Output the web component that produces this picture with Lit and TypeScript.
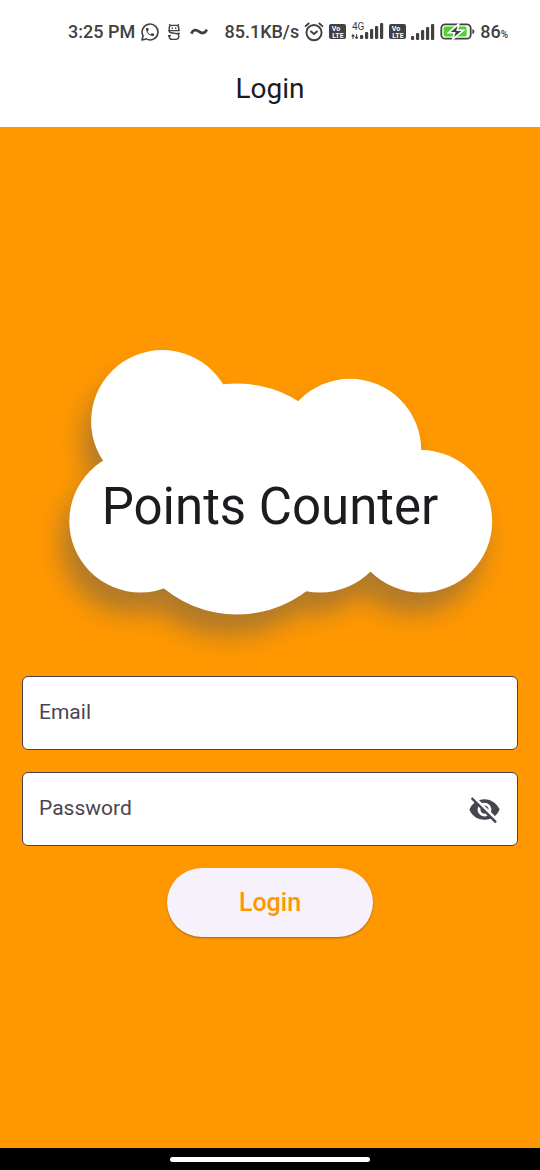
import { LitElement, html, css, svg } from "lit";
import { customElement, state } from "lit/decorators.js";

const PHONE =
  "M6.62 10.79c1.44 2.83 3.76 5.14 6.59 6.59l2.2-2.2c.27-.27.67-.36 1.02-.24 1.12.37 2.33.57 3.57.57.55 0 1 .45 1 1V20c0 .55-.45 1-1 1-9.39 0-17-7.61-17-17 0-.55.45-1 1-1h3.5c.55 0 1 .45 1 1 0 1.25.2 2.45.57 3.57.11.35.03.74-.25 1.02l-2.2 2.2z";
const EYE_OFF =
  "M12 7c2.76 0 5 2.24 5 5 0 .65-.13 1.26-.36 1.83l2.92 2.92c1.51-1.26 2.7-2.89 3.43-4.75-1.73-4.39-6-7.5-11-7.5-1.4 0-2.74.25-3.98.7l2.16 2.16C10.74 7.13 11.35 7 12 7zM2 4.27l2.28 2.28.46.46C3.08 8.3 1.78 10.02 1 12c1.73 4.39 6 7.5 11 7.5 1.55 0 3.03-.3 4.38-.84l.42.42L19.73 22 21 20.73 3.27 3 2 4.27zM7.53 9.8l1.55 1.55c-.05.21-.08.43-.08.65 0 1.66 1.34 3 3 3 .22 0 .44-.03.65-.08l1.55 1.55c-.67.33-1.41.53-2.2.53-2.76 0-5-2.24-5-5 0-.79.2-1.53.53-2.2zm4.31-.78l3.15 3.15.02-.16c0-1.66-1.34-3-3-3l-.17.01z";
const EYE =
  "M12 4.5C7 4.5 2.73 7.61 1 12c1.73 4.39 6 7.5 11 7.5s9.27-3.11 11-7.5c-1.73-4.39-6-7.5-11-7.5zM12 17c-2.76 0-5-2.24-5-5s2.24-5 5-5 5 2.24 5 5-2.24 5-5 5zm0-8c-1.66 0-3 1.34-3 3s1.34 3 3 3 3-1.34 3-3-1.34-3-3-3z";

@customElement("status-bar")
export class StatusBar extends LitElement {
  static styles = css`
    :host {
      display: flex;
      justify-content: space-between;
      height: 31px;
      padding: 16px 32px 0 68px;
      color: #414141;
      font: 500 18px/31px Roboto, sans-serif;
    }
    .group {
      display: flex;
      align-items: center;
      gap: 5px;
      white-space: nowrap;
    }
    .apps {
      gap: 6px;
    }
    .app {
      margin-left: 2px;
    }
    svg {
      display: block;
      flex: none;
    }
    .unit {
      font-size: 10px;
      line-height: 1;
    }
    .tiny {
      font: 10px Roboto, sans-serif;
      fill: #414141;
    }
    .badge {
      font: 700 7px Roboto, sans-serif;
      fill: #fff;
      text-anchor: middle;
    }
  `;

  private volte() {
    return html`<svg width="17" height="16" viewBox="0 0 17 16">
      <rect width="17" height="15" rx="2" fill="#414141" />
      <text class="badge" x="7" y="7">Vo</text>
      <text class="badge" x="9" y="14">LTE</text>
    </svg>`;
  }

  private bars(x: number) {
    return [0, 1, 2, 3, 4].map(
      (i) => svg`<rect x=${x + i * 5} y=${12 - i * 3} width="3.2" height=${4 + i * 3} rx="1" fill="#414141" />`
    );
  }

  render() {
    return html`
      <div class="group apps">
        <span>3:25 PM</span>
        <svg width="18" height="18" viewBox="0 0 18 18" fill="none" stroke="#414141">
          <path stroke-width="1.6" stroke-linejoin="round" d="M1 17 2.1 12.8A7.9 7.9 0 1 1 5.2 15.9Z" />
          <path transform="translate(3.6 3.6) scale(.45)" fill="#414141" stroke="none" d=${PHONE} />
        </svg>
        <svg class="app" width="14" height="18" viewBox="0 0 14 18" fill="none" stroke="#414141" stroke-width="1.4">
          <path d="M2.2 7.4V5Q2.2 2.4 4.8 2.4H9.2Q11.8 2.4 11.8 5V7.4M3.4 3 2.4 1M10.6 3 11.6 1M1.2 7.6H12.8M4.6 5.2H6M8 5.2H9.4M2.2 7.8Q2.2 9.6 4.4 9.8L9.6 10.6Q11.8 11 11.8 13Q11.8 16.4 8.6 16.4H5.4Q2.2 16.4 2.2 13.2M1 12.8H4M9.8 10.4H13" />
        </svg>
        <svg class="app" width="20" height="18" viewBox="0 0 20 18" fill="none" stroke="#414141" stroke-width="2.8">
          <path d="M2.3 10.6C4 6.5 7 6.2 9.8 8.4S15.5 11 17.8 6.6" />
        </svg>
      </div>
      <div class="group">
        <span>85.1KB/s</span>
        <svg width="20" height="20" viewBox="0 0 20 20" fill="none" stroke="#414141" stroke-width="1.9">
          <circle cx="10" cy="10.6" r="7.6" />
          <path d="M1 4.6 5.2 1M19 4.6 14.8 1M6.4 9 10 12 13.6 9" />
        </svg>
        ${this.volte()}
        <svg width="33" height="22" viewBox="0 0 33 22">
          <text class="tiny" x="1" y="9">4G</text>
          <path d="M2 18V14M.8 15.2 2 13.4 3.2 15.2ZM5.6 13V17M4.4 16.2 5.6 18 6.8 16.2Z" fill="#414141" stroke="#414141" />
          <g transform="translate(0 2)">${this.bars(9)}</g>
        </svg>
        ${this.volte()}
        <svg width="24" height="16" viewBox="0 0 24 16">${this.bars(0)}</svg>
        <svg width="35" height="18" viewBox="0 0 35 18">
          <rect x="1.3" y="1.3" width="29.4" height="14.4" rx="4" fill="#fff" stroke="#414141" stroke-width="1.8" />
          <rect x="3.6" y="3.6" width="23" height="9.8" rx="1.6" fill="#53d22c" />
          <path d="M32.4 6Q34.4 6.5 34.4 8.5T32.4 11Z" fill="#414141" />
          <path d="M18.8 .8 8.5 9.8H14.6L12.6 16.4 23.4 7.3H17.3Z" fill="#414141" stroke="#fff" stroke-width="1.6" />
        </svg>
        <span>86<span class="unit">%</span></span>
      </div>
    `;
  }
}

@customElement("cloud-logo")
export class CloudLogo extends LitElement {
  static styles = css`
    :host {
      display: grid;
      place-items: center;
      width: 100%;
      max-width: 496px;
    }
    .cloud,
    .name {
      grid-area: 1 / 1;
    }
    .cloud {
      display: block;
      width: 100%;
      overflow: visible;
    }
    .name {
      z-index: 1;
      margin: 0;
      padding-top: 22px;
      color: #1c1b1f;
      font: 400 51px/64px Roboto, sans-serif;
    }
  `;

  render() {
    return html`
      <svg class="cloud" viewBox="22 338 496 316" aria-hidden="true">
        <defs>
          <filter id="shade" x="-20%" y="-20%" width="140%" height="150%" color-interpolation-filters="sRGB">
            <feDropShadow dx="-8" dy="21" stdDeviation="13" flood-color="#585858" flood-opacity=".48" />
          </filter>
        </defs>
        <g fill="#fff" filter="url(#shade)">
          <circle cx="237" cy="499" r="115.5" />
          <circle cx="162.3" cy="421.3" r="71.2" />
          <circle cx="350" cy="450" r="71.2" />
          <circle cx="140.5" cy="521.3" r="71.2" />
          <circle cx="320" cy="521.3" r="71.2" />
          <circle cx="421" cy="521.3" r="71.2" />
        </g>
      </svg>
      <h1 class="name">Points Counter</h1>
    `;
  }
}

@customElement("app-root")
export class AppRoot extends LitElement {
  static styles = css`
    :host {
      display: flex;
      flex-direction: column;
      min-height: 100vh;
      background: #ff9800;
      font-family: Roboto, sans-serif;
    }
    .top {
      background: #fff;
    }
    .title {
      margin: 0;
      padding: 4px 0 0;
      color: #1c1b1f;
      font-size: 28px;
      font-weight: 400;
      line-height: 76px;
      text-align: center;
    }
    .content {
      flex: 1;
      display: flex;
      flex-direction: column;
      align-items: center;
      justify-content: center;
      gap: 22px;
      padding: 0 22px;
    }
    .form {
      display: flex;
      flex-direction: column;
      align-items: center;
      gap: 22px;
      width: 100%;
    }
    .field {
      display: grid;
      grid-template-columns: 1fr auto;
      align-items: center;
      box-sizing: border-box;
      width: 100%;
      height: 74px;
      padding: 0 16px;
      border: 1px solid #49454f;
      border-radius: 6px;
      background: #fff;
    }
    .label,
    .input {
      grid-area: 1 / 1;
      padding: 0 0 2px;
      color: #49454f;
      font: 400 21px/32px Roboto, sans-serif;
    }
    .label {
      z-index: 1;
      pointer-events: none;
    }
    .input {
      min-width: 0;
      border: 0;
      outline: 0;
      background: none;
    }
    .field:has(.input:not(:placeholder-shown)) .label {
      visibility: hidden;
    }
    .toggle {
      display: block;
      padding: 0;
      border: 0;
      background: none;
      cursor: pointer;
    }
    .eye {
      display: block;
      fill: #49454f;
    }
    .submit {
      width: 206px;
      height: 69px;
      border: 0;
      border-radius: 35px;
      background: #f6f1fa;
      box-shadow: 0 1px 2px rgba(0, 0, 0, 0.35);
      color: #ff9800;
      font: 500 25px/32px Roboto, sans-serif;
      cursor: pointer;
    }
    .nav {
      display: flex;
      justify-content: center;
      align-items: center;
      height: 22px;
      background: #000;
    }
    .handle {
      width: 200px;
      height: 5px;
      border-radius: 3px;
      background: #fff;
    }
  `;

  @state() private revealed = false;

  render() {
    return html`
      <header class="top">
        <status-bar></status-bar>
        <h2 class="title">Login</h2>
      </header>
      <main class="content">
        <cloud-logo></cloud-logo>
        <form class="form" @submit=${(e: Event) => e.preventDefault()}>
          <div class="field">
            <label class="label" for="email">Email</label>
            <input class="input" id="email" type="email" placeholder=" " autocomplete="email" />
          </div>
          <div class="field">
            <label class="label" for="password">Password</label>
            <input class="input" id="password" type=${this.revealed ? "text" : "password"} placeholder=" " />
            <button
              class="toggle"
              type="button"
              aria-label=${this.revealed ? "Hide password" : "Show password"}
              @click=${() => (this.revealed = !this.revealed)}
            >
              <svg class="eye" width="33" height="33" viewBox="0 0 24 24"><path d=${this.revealed ? EYE : EYE_OFF} /></svg>
            </button>
          </div>
          <button class="submit" type="submit">Login</button>
        </form>
      </main>
      <footer class="nav"><div class="handle"></div></footer>
    `;
  }
}
